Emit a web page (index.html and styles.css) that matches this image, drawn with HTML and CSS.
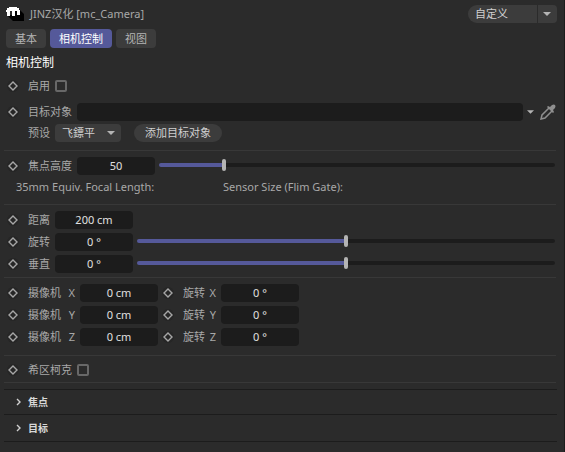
FILE: index.html
```
<!DOCTYPE html>
<html lang="zh-CN">
<head>
    <meta charset="UTF-8">
    <meta name="viewport" content="width=device-width, initial-scale=1.0">
    <title>JINZ汉化 [mc_Camera]</title>
    <link rel="stylesheet" href="styles.css">
</head>
<body>
    <svg class="symbols" aria-hidden="true">
        <symbol id="key" viewBox="0 0 12 12">
            <circle cx="6" cy="6" r="6" fill="#262626"/>
            <path d="M6 2L10 6L6 10L2 6Z" fill="none" stroke="#a6a6a6" stroke-width="1.4"/>
        </symbol>
    </svg>

    <main class="panel">
        <header class="header">
            <svg class="logo" viewBox="0 0 18 16" aria-hidden="true">
                <path d="M1 9L7 15H18V8L13 3H8V9Z" fill="#000"/>
                <path d="M0 4H1V2H3V1H11V2H13V4H14V9H11V5H9V10H6V5H4V10H1V6H0Z" fill="#fff" shape-rendering="crispEdges"/>
            </svg>
            <h1>JINZ汉化 [mc_Camera]</h1>
            <select class="mode" aria-label="模式"><option>自定义</option></select>
        </header>

        <nav class="tabs">
            <button>基本</button>
            <button class="active">相机控制</button>
            <button>视图</button>
        </nav>

        <h2>相机控制</h2>

        <section class="group first">
            <div class="row">
                <button class="key" aria-label="启用关键帧"><svg><use href="#key"/></svg></button>
                <label for="enable">启用</label>
                <input type="checkbox" id="enable">
            </div>
            <div class="row target">
                <button class="key" aria-label="目标对象关键帧"><svg><use href="#key"/></svg></button>
                <label for="target">目标对象</label>
                <input type="text" class="link" id="target">
                <button class="icon" aria-label="展开">
                    <svg class="arrow" viewBox="0 0 8 4"><path d="M0 0H8L4 4Z" fill="#b4b4b4"/></svg>
                </button>
                <button class="icon pick" aria-label="拾取">
                    <svg class="picker" viewBox="0 0 16 16">
                        <path d="M9 4L2 11L1 15L5 14L12 7" fill="none" stroke="#8f8f8f" stroke-width="1.5"/>
                        <path d="M7 3L8 2L10 3L12 1Q14 0 15 1Q16 2 15 4L13 6L14 8L13 9Z" fill="#8f8f8f"/>
                    </svg>
                </button>
            </div>
            <div class="row preset">
                <label for="preset">预设</label>
                <select id="preset"><option>飞鏢平</option></select>
                <button class="pill">添加目标对象</button>
            </div>
        </section>

        <section class="group">
            <div class="row">
                <button class="key" aria-label="焦点高度关键帧"><svg><use href="#key"/></svg></button>
                <label for="focal">焦点高度</label>
                <input type="text" class="value" id="focal" value="50">
                <input type="range" aria-label="焦点高度" value="16" style="--fill: 16%">
            </div>
            <div class="info">
                <span>35mm Equiv. Focal Length:</span>
                <span>Sensor Size (Flim Gate):</span>
            </div>
        </section>

        <section class="group">
            <div class="row">
                <button class="key" aria-label="距离关键帧"><svg><use href="#key"/></svg></button>
                <label for="distance">距离</label>
                <input type="text" class="value" id="distance" value="200 cm">
            </div>
            <div class="row">
                <button class="key" aria-label="旋转关键帧"><svg><use href="#key"/></svg></button>
                <label for="rotate">旋转</label>
                <input type="text" class="value" id="rotate" value="0 °">
                <input type="range" aria-label="旋转" value="50" style="--fill: 50%">
            </div>
            <div class="row">
                <button class="key" aria-label="垂直关键帧"><svg><use href="#key"/></svg></button>
                <label for="vertical">垂直</label>
                <input type="text" class="value" id="vertical" value="0 °">
                <input type="range" aria-label="垂直" value="50" style="--fill: 50%">
            </div>
        </section>

        <section class="group camera">
            <div class="row">
                <button class="key" aria-label="摄像机 X 关键帧"><svg><use href="#key"/></svg></button>
                <label class="axis" for="cam-x"><span>摄像机</span><span>X</span></label>
                <input type="text" class="value" id="cam-x" value="0 cm">
                <button class="key" aria-label="旋转 X 关键帧"><svg><use href="#key"/></svg></button>
                <label class="turn" for="rot-x"><span>旋转</span><span>X</span></label>
                <input type="text" class="value" id="rot-x" value="0 °">
            </div>
            <div class="row">
                <button class="key" aria-label="摄像机 Y 关键帧"><svg><use href="#key"/></svg></button>
                <label class="axis" for="cam-y"><span>摄像机</span><span>Y</span></label>
                <input type="text" class="value" id="cam-y" value="0 cm">
                <button class="key" aria-label="旋转 Y 关键帧"><svg><use href="#key"/></svg></button>
                <label class="turn" for="rot-y"><span>旋转</span><span>Y</span></label>
                <input type="text" class="value" id="rot-y" value="0 °">
            </div>
            <div class="row">
                <button class="key" aria-label="摄像机 Z 关键帧"><svg><use href="#key"/></svg></button>
                <label class="axis" for="cam-z"><span>摄像机</span><span>Z</span></label>
                <input type="text" class="value" id="cam-z" value="0 cm">
                <button class="key" aria-label="旋转 Z 关键帧"><svg><use href="#key"/></svg></button>
                <label class="turn" for="rot-z"><span>旋转</span><span>Z</span></label>
                <input type="text" class="value" id="rot-z" value="0 °">
            </div>
        </section>

        <section class="group last">
            <div class="row">
                <button class="key" aria-label="希区柯克关键帧"><svg><use href="#key"/></svg></button>
                <label for="hitchcock">希区柯克</label>
                <input type="checkbox" id="hitchcock">
            </div>
        </section>

        <div class="folds">
            <button class="fold">
                <svg viewBox="0 0 6 8"><path d="M1 1L4 4L1 7" fill="none" stroke="#d0d0d0" stroke-width="1.4"/></svg>
                焦点
            </button>
            <button class="fold">
                <svg viewBox="0 0 6 8"><path d="M1 1L4 4L1 7" fill="none" stroke="#d0d0d0" stroke-width="1.4"/></svg>
                目标
            </button>
        </div>
    </main>
</body>
</html>
```
FILE: styles.css
```
* {
    box-sizing: border-box;
}

body {
    margin: 0;
    min-height: 100vh;
    background: #2b2b2b;
    border-right: 1px solid #1c1c1c;
    color: #a8a8a8;
    font: 11px/18px "Noto Sans", "Noto Sans CJK SC", sans-serif;
}

button,
input,
select {
    margin: 0;
    padding: 0;
    border: none;
    background: none;
    color: inherit;
    font: inherit;
}

.symbols {
    display: none;
}

.panel {
    padding: 5px 7px 0 4px;
}

.header {
    display: flex;
    align-items: center;
    padding-left: 2px;
}

.logo {
    width: 18px;
    height: 16px;
    margin-right: 6px;
}

h1 {
    flex: 1;
    margin: 0;
    font-size: 11px;
    font-weight: normal;
}

select {
    appearance: none;
    height: 18px;
    padding-left: 7px;
    border-radius: 4px;
    color: #d0d0d0;
    background: #3c3c3c url("data:image/svg+xml,%3Csvg xmlns='http://www.w3.org/2000/svg' width='8' height='4'%3E%3Cpath d='M0 0H8L4 4Z' fill='%23b4b4b4'/%3E%3C/svg%3E") no-repeat right 6px center;
}

.mode {
    width: 89px;
    border-radius: 9px 4px 4px 9px;
    background-image: url("data:image/svg+xml,%3Csvg xmlns='http://www.w3.org/2000/svg' width='20' height='18'%3E%3Cpath d='M0 0H1V18H0Z' fill='%232b2b2b'/%3E%3Cpath d='M6 7H14L10 11Z' fill='%23b4b4b4'/%3E%3C/svg%3E");
    background-position: right center;
}

.tabs {
    display: flex;
    gap: 4px;
    margin: 6px 0 0 2px;
}

.tabs button {
    height: 19px;
    padding: 0 9px;
    border-radius: 4px;
    background: #3c3c3c;
    color: #b4b4b4;
}

.tabs .active {
    background: #55599a;
    color: #fff;
}

h2 {
    margin: 6px 0 5px 2px;
    color: #fff;
    font-size: 12px;
    font-weight: normal;
}

.group {
    display: flex;
    flex-direction: column;
    gap: 4px;
    margin: 0 1px 0 0;
    padding: 6px 0 4px;
    border-bottom: 1px solid #383838;
}

.first {
    gap: 3px;
    padding: 0 0 8px;
}

.row {
    display: flex;
    align-items: center;
    height: 18px;
}

.target {
    margin-top: 5px;
}

.key {
    width: 12px;
    height: 12px;
    margin: 0 9px 0 3px;
}

.key svg {
    display: block;
    width: 12px;
    height: 12px;
}

label {
    margin-right: 5px;
}

.value {
    width: 78px;
    height: 18px;
    border-radius: 4px;
    background: #1c1c1c;
    color: #e0e0e0;
    text-align: center;
}

.link {
    flex: 1;
    min-width: 0;
    height: 18px;
    border-radius: 4px;
    background: #1c1c1c;
}

.icon {
    display: flex;
    margin-left: 4px;
}

.pick {
    margin-left: 6px;
}

.arrow {
    width: 7px;
    height: 4px;
}

.picker {
    width: 16px;
    height: 16px;
}

input[type="checkbox"] {
    appearance: none;
    width: 12px;
    height: 12px;
    border: 2px solid #686868;
    border-radius: 2px;
}

.preset {
    padding-left: 24px;
}

.preset select {
    width: 66px;
}

.pill {
    height: 18px;
    margin-left: 13px;
    padding: 0 11px;
    border-radius: 9px;
    background: #3c3c3c;
    color: #d0d0d0;
}

input[type="range"] {
    appearance: none;
    flex: 1;
    min-width: 0;
    height: 12px;
    margin: 0 1px 2px 4px;
}

input[type="range"]::-webkit-slider-runnable-track {
    height: 4px;
    border-radius: 2px;
    background: linear-gradient(to right, #55599a var(--fill), #1c1c1c var(--fill));
}

input[type="range"]::-webkit-slider-thumb {
    appearance: none;
    width: 4px;
    height: 12px;
    margin-top: -4px;
    border-radius: 2px;
    background: #b4b4b4;
}

.info {
    display: grid;
    grid-template-columns: 207px 1fr;
    padding: 0 0 6px 12px;
    line-height: 15px;
}

.camera {
    padding-bottom: 9px;
}

.last {
    padding: 5px 0 3px;
}

.axis,
.turn {
    display: flex;
    justify-content: space-between;
    width: 47px;
}

.turn {
    width: 33px;
}

/* second column of keys */
.value + .key {
    margin-left: 4px;
}

.folds {
    margin: 6px 0 0;
}

.fold {
    display: flex;
    align-items: center;
    width: 100%;
    height: 25px;
    padding-left: 12px;
    border-top: 1px solid #1c1c1c;
    color: #d8d8d8;
    font-size: 10px;
    font-weight: bold;
}

.fold:last-child {
    height: 28px;
    border-bottom: 1px solid #1c1c1c;
}

.fold svg {
    width: 6px;
    height: 8px;
    margin-right: 6px;
}
```
